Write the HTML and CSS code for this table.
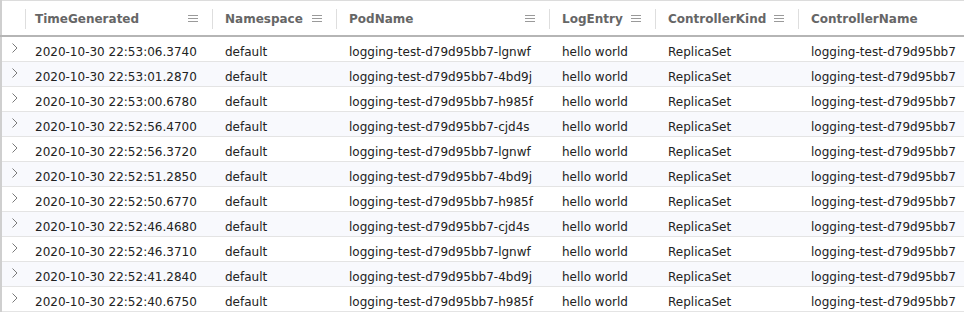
FILE: index.html
```html
<!DOCTYPE html>
<html lang="en">
<head>
    <meta charset="UTF-8">
    <title>Logs</title>
    <link rel="stylesheet" href="styles.css">
</head>
<body>
    <div class="grid-wrap">
        <table class="grid">
            <colgroup>
                <col class="c-exp">
                <col class="c-time">
                <col class="c-ns">
                <col class="c-pod">
                <col class="c-log">
                <col class="c-kind">
                <col class="c-name">
            </colgroup>
            <thead>
                <tr>
                    <th></th>
                    <th><div class="th-inner first"><span>TimeGenerated</span><svg class="menu" width="10" height="9" viewBox="0 0 10 9"><path d="M0 1.5h10M0 4.5h10M0 7.5h10"/></svg></div></th>
                    <th><div class="th-inner"><span>Namespace</span><svg class="menu" width="10" height="9" viewBox="0 0 10 9"><path d="M0 1.5h10M0 4.5h10M0 7.5h10"/></svg></div></th>
                    <th><div class="th-inner"><span>PodName</span><svg class="menu" width="10" height="9" viewBox="0 0 10 9"><path d="M0 1.5h10M0 4.5h10M0 7.5h10"/></svg></div></th>
                    <th><div class="th-inner"><span>LogEntry</span><svg class="menu" width="10" height="9" viewBox="0 0 10 9"><path d="M0 1.5h10M0 4.5h10M0 7.5h10"/></svg></div></th>
                    <th><div class="th-inner"><span>ControllerKind</span><svg class="menu" width="10" height="9" viewBox="0 0 10 9"><path d="M0 1.5h10M0 4.5h10M0 7.5h10"/></svg></div></th>
                    <th><div class="th-inner"><span>ControllerName</span><svg class="menu" width="10" height="9" viewBox="0 0 10 9"><path d="M0 1.5h10M0 4.5h10M0 7.5h10"/></svg></div></th>
                </tr>
            </thead>
            <tbody id="rows"></tbody>
        </table>
    </div>

    <script>
        const rows = [
            ['2020-10-30 22:53:06.3740', 'lgnwf'],
            ['2020-10-30 22:53:01.2870', '4bd9j'],
            ['2020-10-30 22:53:00.6780', 'h985f'],
            ['2020-10-30 22:52:56.4700', 'cjd4s'],
            ['2020-10-30 22:52:56.3720', 'lgnwf'],
            ['2020-10-30 22:52:51.2850', '4bd9j'],
            ['2020-10-30 22:52:50.6770', 'h985f'],
            ['2020-10-30 22:52:46.4680', 'cjd4s'],
            ['2020-10-30 22:52:46.3710', 'lgnwf'],
            ['2020-10-30 22:52:41.2840', '4bd9j'],
            ['2020-10-30 22:52:40.6750', 'h985f']
        ];

        const chevron = '<svg class="chev" width="6" height="10" viewBox="0 0 6 10"><path d="M0.5 0.5l4.5 4.5-4.5 4.5"/></svg>';

        const body = document.getElementById('rows');
        rows.forEach(function(r) {
            const tr = document.createElement('tr');
            tr.innerHTML =
                '<td class="exp">' + chevron + '</td>' +
                '<td class="first">' + r[0] + '</td>' +
                '<td>default</td>' +
                '<td>logging-test-d79d95bb7-' + r[1] + '</td>' +
                '<td>hello world</td>' +
                '<td>ReplicaSet</td>' +
                '<td>logging-test-d79d95bb7</td>';
            body.appendChild(tr);
        });
    </script>
</body>
</html>
```

FILE: styles.css
```css
body {
    margin: 0;
    background: #fff;
    font-family: 'DejaVu Sans', Verdana, sans-serif;
    font-size: 12px;
    color: #222;
    overflow: hidden;
}

.grid-wrap {
    width: 964px;
    overflow: hidden;
}

.grid {
    width: 1000px;
    table-layout: fixed;
    border-collapse: collapse;
    border-left: 2px solid #cfcfcf;
    border-top: 1px solid #dcdcdc;
}

.c-exp { width: 24px; }
.c-time { width: 187px; }
.c-ns { width: 124px; }
.c-pod { width: 213px; }
.c-log { width: 106px; }
.c-kind { width: 143px; }
.c-name { width: 203px; }

th {
    height: 33px;
    padding: 1px 0 0;
    border-bottom: 2px solid #b5b5b5;
    text-align: left;
    font-weight: bold;
    color: #666;
    white-space: nowrap;
}

.th-inner {
    display: flex;
    align-items: center;
    justify-content: space-between;
    height: 20px;
    border-left: 1px solid #dedede;
    padding: 0 14px 0 12px;
}

.th-inner.first {
    padding-left: 9px;
}

.menu {
    flex: none;
}

.menu path {
    stroke: #9a9a9a;
    stroke-width: 1.2;
    fill: none;
}

td {
    height: 19px;
    padding: 5px 0 0 13px;
    border-bottom: 1px solid #e4e4e4;
    white-space: nowrap;
    overflow: hidden;
    vertical-align: middle;
    line-height: 14px;
}

td.first {
    padding-left: 10px;
}

td.exp {
    padding: 6px 0 0 10px;
    height: 18px;
    vertical-align: top;
}

tbody tr:nth-child(even) {
    background: #f8f9fd;
}

.chev {
    display: block;
}

.chev path {
    stroke: #7a7a7a;
    stroke-width: 1;
    fill: none;
}
```
